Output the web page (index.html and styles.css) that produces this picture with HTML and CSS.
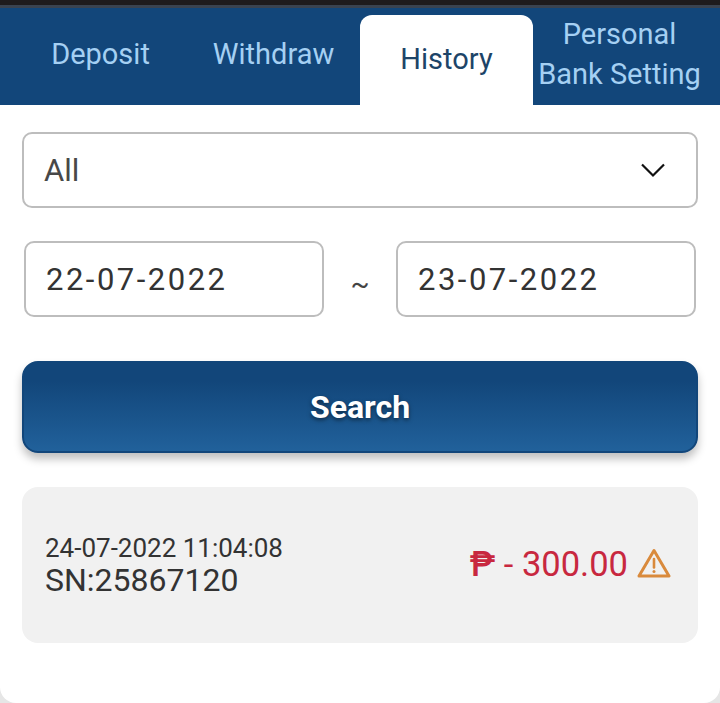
FILE: index.html
```html
<!DOCTYPE html>
<html lang="en">

<head>
    <meta charset="UTF-8">
    <title>History</title>
    <meta name="viewport" content="width=device-width, initial-scale=1">
    <link rel="stylesheet" href="styles.css">
</head>

<body>
    <div class="status-edge"></div>

    <div class="tabs">
        <div class="tab">Deposit</div>
        <div class="tab">Withdraw</div>
        <div class="tab tab-active">History</div>
        <div class="tab tab-wide">Personal Bank Setting</div>
    </div>

    <div class="content">
        <div class="select-box">
            <span>All</span>
            <svg class="chevron" width="26" height="16" viewBox="0 0 26 16">
                <path d="M2 2.5 L13 13.5 L24 2.5" fill="none" stroke="#111" stroke-width="2.2" />
            </svg>
        </div>

        <div class="date-row">
            <div class="date-box">22-07-2022</div>
            <div class="tilde">~</div>
            <div class="date-box">23-07-2022</div>
        </div>

        <button class="search-btn">Search</button>

        <div class="record">
            <div class="record-left">
                <div class="record-date">24-07-2022 11:04:08</div>
                <div class="record-sn">SN:25867120</div>
            </div>
            <div class="record-right">
                <span class="amount"><span class="peso">₱</span> - 300.00</span>
                <svg class="warn" width="34" height="31" viewBox="0 0 34 31">
                    <path d="M17 2.5 L32 28 L2 28 Z" fill="none" stroke="#d98a3c" stroke-width="3" stroke-linejoin="round" />
                    <path d="M17 11 L17 19.5" fill="none" stroke="#d98a3c" stroke-width="2.6" stroke-linecap="round" />
                    <circle cx="17" cy="23.6" r="1.5" fill="#d98a3c" />
                </svg>
            </div>
        </div>
    </div>
</body>

</html>
```

FILE: styles.css
```css
* {
    box-sizing: border-box;
}

html {
    background-color: #e6e6e6;
}

body {
    margin: 0;
    height: 703px;
    overflow: hidden;
    font-family: Roboto, sans-serif;
    background-color: #fff;
    border-radius: 0 0 16px 16px;
}

.status-edge {
    height: 8px;
    background-color: #1e1b1d;
    border-bottom: 3px solid #3a4350;
}

.tabs {
    display: flex;
    height: 97px;
    padding: 7px 14px 0;
    background-color: #12467a;
}

.tab {
    flex: 1;
    display: flex;
    align-items: center;
    justify-content: center;
    padding-bottom: 13px;
    font-size: 29px;
    line-height: 40px;
    text-align: center;
    color: #a5d0f3;
}

.tab-active {
    padding-bottom: 3px;
    background-color: #fff;
    color: #1d4468;
    border-radius: 12px 12px 0 0;
}

.tab-wide {
    padding-bottom: 12px;
}

.content {
    padding: 27px 22px 0;
}

.select-box {
    display: flex;
    align-items: center;
    justify-content: space-between;
    height: 76px;
    padding: 0 30px 0 20px;
    border: 2px solid #bdbdbd;
    border-radius: 10px;
    font-size: 31px;
    color: #484848;
}

.date-row {
    display: flex;
    align-items: center;
    justify-content: space-between;
    margin-top: 33px;
    padding: 0 2px;
}

.date-box {
    width: 300px;
    height: 76px;
    display: flex;
    align-items: center;
    padding-left: 20px;
    border: 2px solid #bdbdbd;
    border-radius: 10px;
    font-size: 31px;
    letter-spacing: 2.5px;
    color: #333;
}

.tilde {
    font-size: 28px;
    color: #444;
    padding-top: 8px;
}

.search-btn {
    display: block;
    width: 100%;
    height: 92px;
    margin-top: 44px;
    border: 2px solid #12467a;
    border-radius: 16px;
    background: linear-gradient(to bottom, #12467a 20%, #21619b 100%);
    box-shadow: 0 6px 8px rgba(0, 0, 0, 0.25);
    font-family: Roboto, sans-serif;
    font-size: 32px;
    font-weight: 700;
    color: #fff;
    text-shadow: 0 2px 4px rgba(0, 0, 0, 0.5);
}

.record {
    display: flex;
    align-items: center;
    justify-content: space-between;
    height: 156px;
    margin-top: 34px;
    padding: 0 27px 0 23px;
    background-color: #f1f1f1;
    border-radius: 16px;
}

.record-left {
    padding-top: 1px;
}

.record-date {
    font-size: 26px;
    line-height: 28px;
    color: #333;
}

.record-sn {
    font-size: 32px;
    line-height: 36px;
    color: #333;
}

.record-right {
    display: flex;
    align-items: center;
    gap: 9px;
    padding-bottom: 3px;
}

.amount {
    font-size: 34.5px;
    color: #c8283f;
}

.peso {
    font-weight: 500;
}
```
